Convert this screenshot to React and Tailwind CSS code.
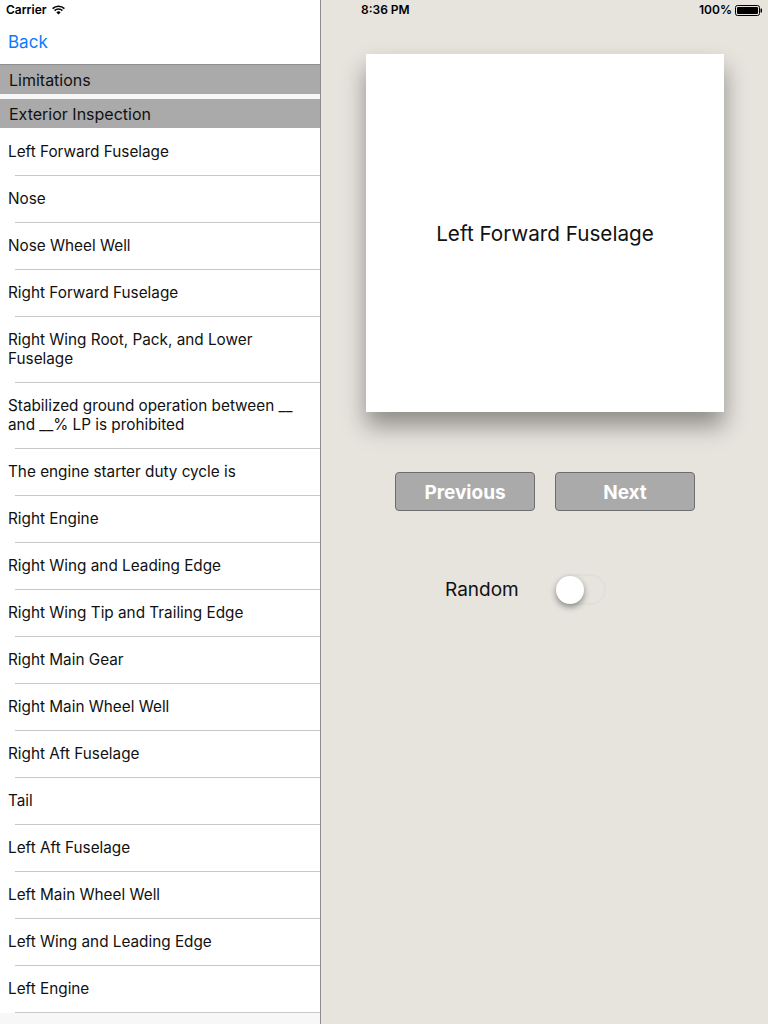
import React from "react";

const items = [
  "Left Forward Fuselage",
  "Nose",
  "Nose Wheel Well",
  "Right Forward Fuselage",
  "Right Wing Root, Pack, and Lower Fuselage",
  "Stabilized ground operation between __ and __% LP is prohibited",
  "The engine starter duty cycle is",
  "Right Engine",
  "Right Wing and Leading Edge",
  "Right Wing Tip and Trailing Edge",
  "Right Main Gear",
  "Right Main Wheel Well",
  "Right Aft Fuselage",
  "Tail",
  "Left Aft Fuselage",
  "Left Main Wheel Well",
  "Left Wing and Leading Edge",
  "Left Engine",
];

function Wifi() {
  return (
    <svg width="13" height="10" viewBox="0 0 13 10" className="ml-[5px]">
      <path d="M0.6 3.6 A8.4 8.4 0 0 1 12.4 3.6" stroke="#000" strokeWidth="1.5" fill="none" />
      <path d="M2.6 5.6 A5.6 5.6 0 0 1 10.4 5.6" stroke="#000" strokeWidth="1.5" fill="none" />
      <path d="M6.5 9.6 L4.4 7.4 A3 3 0 0 1 8.6 7.4 Z" fill="#000" />
    </svg>
  );
}

function Battery() {
  return (
    <svg width="28" height="11" viewBox="0 0 28 11" className="ml-[3px]">
      <rect x="0.5" y="0.5" width="24" height="10" rx="2" fill="none" stroke="#000" strokeWidth="1" />
      <rect x="2" y="2" width="21" height="7" rx="1" fill="#000" />
      <rect x="25.5" y="3.5" width="1.5" height="4" rx="0.5" fill="#000" />
    </svg>
  );
}

function NavButton({ label }) {
  return (
    <button className="w-[140px] h-[39px] rounded-[4px] bg-[#aaaaaa] border border-[#6e6e6e] text-white text-[19px] font-bold flex items-center justify-center pt-[3px]">
      {label}
    </button>
  );
}

export default function App() {
  return (
    <div
      className="flex w-[768px] h-[1024px] overflow-hidden bg-[#e7e4de]"
      style={{ fontFamily: "Inter, 'Helvetica Neue', Arial, sans-serif" }}
    >
      {/* master list */}
      <div className="w-[320px] h-full flex flex-col bg-[#f7f7f7] shrink-0">
        <div className="bg-white">
          <div className="h-[20px] flex items-center pl-[6px] text-[12px] font-semibold text-black">
            Carrier
            <Wifi />
          </div>
          <div className="h-[45px] flex items-center pl-[8px] pt-[1px] text-[17px] text-[#0a7aff] border-b border-[#8f8f8f]">
            Back
          </div>
          <div className="h-[29px] flex items-center pl-[9px] bg-[#aaaaaa] text-[16px] text-[#111]">
            Limitations
          </div>
          <div className="h-[5px] bg-[#f7f7f7]" />
          <div className="h-[29px] flex items-center pl-[9px] bg-[#aaaaaa] text-[16px] text-[#111]">
            Exterior Inspection
          </div>
          <div className="h-px" />
          {items.map((t) => (
            <div key={t} className="relative flex items-center pl-[8px] pr-[24px] pt-[13px] pb-[15px] text-[15.3px] leading-[19px] text-[#111]">
              {t}
              <div className="absolute left-[15px] right-0 bottom-0 h-px bg-[#c8c7cc]" />
            </div>
          ))}
        </div>
      </div>
      <div className="w-px h-full bg-[#8c8c8c] shrink-0" />

      {/* detail */}
      <div className="flex-1 flex flex-col">
        <div className="h-[20px] flex items-center justify-between pl-[40px] pr-[5px] text-[12px] font-semibold text-black">
          <span>8:36 PM</span>
          <span className="flex items-center">
            100%
            <Battery />
          </span>
        </div>
        <div className="flex flex-col items-center">
          <div className="mt-[34px] ml-[1px] w-[358px] h-[358px] bg-white flex items-center justify-center shadow-[0_14px_22px_rgba(0,0,0,0.38)]">
            <span className="text-[20.7px] text-[#111] pt-[1px]">Left Forward Fuselage</span>
          </div>
          <div className="mt-[60px] ml-[1px] flex gap-[20px]">
            <NavButton label="Previous" />
            <NavButton label="Next" />
          </div>
        </div>
        <div className="mt-[63px] ml-[124px] flex items-center">
          <span className="text-[19px] text-[#111] w-[110px] pt-[2px]">Random</span>
          <div className="relative w-[51px] h-[31px] rounded-full border-2 border-[#e1dfda]">
            <div className="absolute left-[-1px] top-[-0.5px] w-[28px] h-[28px] rounded-full bg-white shadow-[0_3px_6px_rgba(0,0,0,0.4)]" />
          </div>
        </div>
      </div>
    </div>
  );
}
